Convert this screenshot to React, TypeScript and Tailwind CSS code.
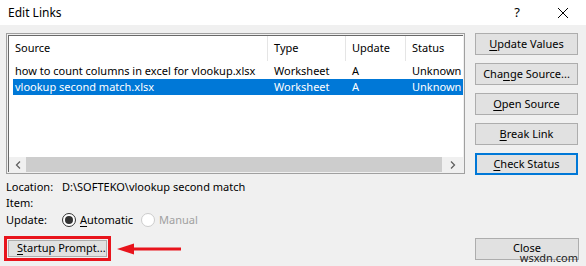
import React from 'react'

const links = [
  { source: 'how to count columns in excel for vlookup.xlsx', type: 'Worksheet', update: 'A', status: 'Unknown', selected: false },
  { source: 'vlookup second match.xlsx', type: 'Worksheet', update: 'A', status: 'Unknown', selected: true },
]

function Key({ children }: { children: React.ReactNode }) {
  return <span className="underline underline-offset-2">{children}</span>
}

function SideButton({ children, focused }: { children: React.ReactNode; focused?: boolean }) {
  return (
    <button
      className={`w-[103px] h-[22px] bg-[#e1e1e1] text-black flex items-center justify-center ${
        focused ? 'border-2 border-[#0078d7]' : 'border border-[#adadad]'
      }`}
    >
      <span className="whitespace-nowrap">{children}</span>
    </button>
  )
}

function LinkList() {
  return (
    <div className="w-[459px] h-[141px] border border-[#a0a0a0] p-px bg-[#f0f0f0]">
      <div className="w-full h-full border-t border-l border-[#696969] bg-white flex flex-col">
        {/* header */}
        <div className="h-[25px] flex items-center">
          <div className="w-[259px] h-full pl-[6px] flex items-center border-r border-[#e5e5e5]">Source</div>
          <div className="w-[78px] h-full pl-[6px] flex items-center border-r border-[#e5e5e5]">Type</div>
          <div className="w-[60px] h-full pl-[6px] flex items-center border-r border-[#e5e5e5]">Update</div>
          <div className="flex-1 h-full pl-[6px] flex items-center">Status</div>
        </div>
        <div className="h-[2px]" />
        {links.map((l) => (
          <div
            key={l.source}
            className={`h-[16px] flex items-center whitespace-nowrap ${
              l.selected ? 'bg-[#0078d7] text-white ml-[4px]' : 'text-black'
            }`}
          >
            <div className={`${l.selected ? 'w-[255px] pl-[2px]' : 'w-[259px] pl-[6px]'}`}>{l.source}</div>
            <div className="w-[78px] pl-[6px]">{l.type}</div>
            <div className="w-[60px] pl-[6px]">{l.update}</div>
            <div className="flex-1 pl-[6px] overflow-hidden">{l.status}</div>
          </div>
        ))}
        <div className="flex-1" />
        {/* horizontal scrollbar */}
        <div className="h-[15px] flex items-center bg-[#f0f0f0]">
          <div className="w-[17px] h-full flex items-center justify-center">
            <svg width="6" height="8" viewBox="0 0 6 8"><path d="M5 0.5 L1.5 4 L5 7.5" stroke="#606060" strokeWidth="1.3" fill="none" /></svg>
          </div>
          <div className="flex-1 h-full bg-[#cdcdcd]" />
          <div className="w-[21px] h-full flex items-center justify-center">
            <svg width="6" height="8" viewBox="0 0 6 8"><path d="M1 0.5 L4.5 4 L1 7.5" stroke="#606060" strokeWidth="1.3" fill="none" /></svg>
          </div>
        </div>
      </div>
    </div>
  )
}

function Radio({ checked, disabled, children }: { checked?: boolean; disabled?: boolean; children: React.ReactNode }) {
  return (
    <div className={`flex items-center gap-[4px] ${disabled ? 'text-[#a0a0a0]' : 'text-black'}`}>
      <div
        className={`w-[14px] h-[14px] rounded-full border flex items-center justify-center bg-white ${
          disabled ? 'border-[#cccccc]' : 'border-[#333333]'
        }`}
      >
        {checked && <div className="w-[8px] h-[8px] rounded-full bg-[#333333]" />}
      </div>
      <span>{children}</span>
    </div>
  )
}

export default function App() {
  return (
    <div className="w-[586px] h-[266px] flex flex-col font-['Segoe_UI','Noto_Sans',sans-serif] text-[11px] text-black overflow-hidden relative">
      {/* Title bar */}
      <div className="h-[25px] bg-white flex items-center shrink-0">
        <span className="pl-[8px] text-[12px] flex-1">Edit Links</span>
        <span className="w-[46px] text-center text-[13px]">?</span>
        <span className="w-[46px] flex justify-center">
          <svg width="12" height="12" viewBox="0 0 12 12"><path d="M1 1 L11 11 M11 1 L1 11" stroke="#000" strokeWidth="1" /></svg>
        </span>
      </div>

      {/* Body */}
      <div className="flex-1 bg-[#f0f0f0] flex flex-col pl-[6px] pr-[7px] pt-[8px]">
        <div className="flex gap-[10px]">
          <LinkList />
          <div className="flex flex-col gap-[8px]">
            <SideButton><Key>U</Key>pdate Values</SideButton>
            <SideButton>Cha<Key>n</Key>ge Source...</SideButton>
            <SideButton><Key>O</Key>pen Source</SideButton>
            <SideButton><Key>B</Key>reak Link</SideButton>
            <SideButton focused><Key>C</Key>heck Status</SideButton>
          </div>
        </div>

        <div className="mt-[4px] flex flex-col">
          <div className="h-[16px] flex items-center">
            <span className="w-[56px]">Location:</span>
            <span>D:\SOFTEKO\vlookup second match</span>
          </div>
          <div className="h-[16px] flex items-center">Item:</div>
          <div className="h-[18px] flex items-center">
            <span className="w-[56px]">Update:</span>
            <div className="flex items-center gap-[8px]">
              <Radio checked><Key>A</Key>utomatic</Radio>
              <Radio disabled>Manual</Radio>
            </div>
          </div>
        </div>

        <div className="mt-[7px] flex items-center justify-between">
          <div className="flex items-center">
            <div className="border-[3px] border-[#e8141c] -ml-[2px] p-px">
              <button className="w-[99px] h-[17px] bg-[#e1e1e1] border border-[#adadad] flex items-center pl-[8px]">
                <span className="whitespace-nowrap"><Key>S</Key>tartup Prompt...</span>
              </button>
            </div>
            <svg width="66" height="12" viewBox="0 0 66 12" className="ml-[6px]">
              <path d="M15 6 L64 6" stroke="#e8141c" strokeWidth="3" />
              <path d="M0 6 L17 0.5 L17 11.5 Z" fill="#e8141c" />
            </svg>
          </div>
          <button className="w-[104px] h-[22px] bg-[#e1e1e1] border border-[#adadad] flex items-center justify-center">
            Close
          </button>
        </div>
      </div>
      <span className="absolute right-[8px] bottom-[3px] text-[11px] text-[#222] leading-none">wsxdn.com</span>
    </div>
  )
}
